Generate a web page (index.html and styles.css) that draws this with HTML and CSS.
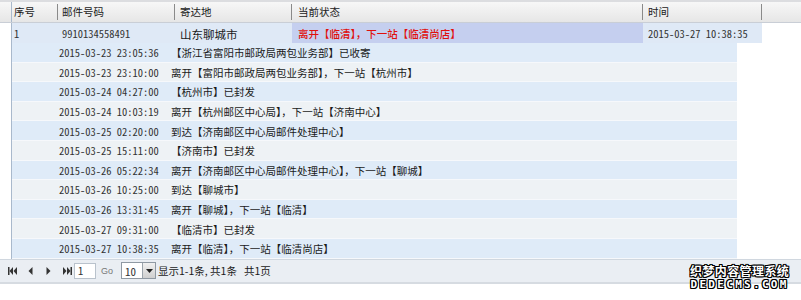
FILE: index.html
```html
<!DOCTYPE html>
<html>
<head>
<meta charset="utf-8">
<link rel="stylesheet" href="styles.css">
</head>
<body>
<div class="grid">
  <div class="hd">
    <div class="gut"></div>
    <div class="hc c1">序号</div>
    <div class="hc c2">邮件号码</div>
    <div class="hc c3">寄达地</div>
    <div class="hc c4">当前状态</div>
    <div class="hc c5">时间</div>
    <div class="hc cx"></div>
  </div>
  <div class="body">
    <div class="row main">
      <div class="gut"></div>
      <div class="dc c1 mono">1</div>
      <div class="dc c2 mono">9910134558491</div>
      <div class="dc c3 city">山东聊城市</div>
      <div class="dc c4 status">离开【临清】，下一站【临清尚店】</div>
      <div class="dc c5 mono">2015-03-27 10:38:35</div>
    </div>
    <div class="detail">
      <div class="drow"><span class="dt mono">2015-03-23 23:05:36</span><span class="dd">【浙江省富阳市邮政局两包业务部】已收寄</span></div>
      <div class="drow"><span class="dt mono">2015-03-23 23:10:00</span><span class="dd">离开【富阳市邮政局两包业务部】，下一站【杭州市】</span></div>
      <div class="drow"><span class="dt mono">2015-03-24 04:27:00</span><span class="dd">【杭州市】已封发</span></div>
      <div class="drow"><span class="dt mono">2015-03-24 10:03:19</span><span class="dd">离开【杭州邮区中心局】，下一站【济南中心】</span></div>
      <div class="drow"><span class="dt mono">2015-03-25 02:20:00</span><span class="dd">到达【济南邮区中心局邮件处理中心】</span></div>
      <div class="drow"><span class="dt mono">2015-03-25 15:11:00</span><span class="dd">【济南市】已封发</span></div>
      <div class="drow"><span class="dt mono">2015-03-26 05:22:34</span><span class="dd">离开【济南邮区中心局邮件处理中心】，下一站【聊城】</span></div>
      <div class="drow"><span class="dt mono">2015-03-26 10:25:00</span><span class="dd">到达【聊城市】</span></div>
      <div class="drow"><span class="dt mono">2015-03-26 13:31:45</span><span class="dd">离开【聊城】，下一站【临清】</span></div>
      <div class="drow"><span class="dt mono">2015-03-27 09:31:00</span><span class="dd">【临清市】已封发</span></div>
      <div class="drow"><span class="dt mono">2015-03-27 10:38:35</span><span class="dd">离开【临清】，下一站【临清尚店】</span></div>
    </div>
  </div>
  <div class="pager">
    <svg class="pi" width="10" height="8" viewBox="0 0 10 8"><rect x="0" y="0" width="1.5" height="8" fill="#333"/><path d="M5 0 L1.5 4 L5 8Z M9 0 L5.5 4 L9 8Z" fill="#333"/></svg>
    <svg class="pi" width="6" height="8" viewBox="0 0 6 8"><path d="M4.5 0 L0.5 4 L4.5 8Z" fill="#333"/></svg>
    <svg class="pi" width="6" height="8" viewBox="0 0 6 8"><path d="M1.5 0 L5.5 4 L1.5 8Z" fill="#333"/></svg>
    <svg class="pi" width="10" height="8" viewBox="0 0 10 8"><path d="M1 0 L4.5 4 L1 8Z M5 0 L8.5 4 L5 8Z" fill="#333"/><rect x="8.5" y="0" width="1.5" height="8" fill="#333"/></svg>
    <span class="pinput mono">1</span>
    <span class="go">Go</span>
    <span class="psel"><span class="mono">10</span><span class="arr"><svg width="7" height="4" viewBox="0 0 7 4"><path d="M0 0 H7 L3.5 4Z" fill="#222"/></svg></span></span>
    <span class="info">显示1-1条, 共1条&nbsp;&nbsp;&nbsp;共1页</span>
  </div>
</div>
<div class="wm"><div class="wm1">织梦内容管理系统</div><div class="wm2">DEDECMS.COM</div></div>
</body>
</html>
```
FILE: styles.css
```css
html, body { margin: 0; padding: 0; background: #fff; }
body {
  width: 801px; height: 300px; overflow: hidden; position: relative;
  font-family: "Noto Sans CJK SC", "Noto Sans", sans-serif;
  font-size: 10.5px; color: #1a1a1a;
}
.mono { font-family: "Noto Sans Mono CJK SC", "Liberation Mono", monospace; font-size: 10.5px; color: #333; }
.grid { width: 801px; }
.hd {
  display: flex; height: 23px; box-sizing: border-box; align-items: stretch;
  background: linear-gradient(#f7f7f7, #e6e6e6);
  border-top: 2px solid #dcdde0;
  border-bottom: 1px solid #c9ced6;
}
.gut { width: 12px; flex: none; border-right: 1px solid #a9b9cc; box-sizing: border-box; }
.hc { display: flex; align-items: center; box-sizing: border-box; line-height: 1; color: #1a1a1a; }
.c1 { width: 46px; padding-left: 2px; }
.c2 { width: 117px; padding-left: 4px; }
.c3 { width: 117px; padding-left: 5px; }
.c4 { width: 351px; padding-left: 6px; }
.c5 { width: 119px; padding-left: 5px; }
.hd .hc { border-image: linear-gradient(transparent 12%, #8a8a8a 12%, #8a8a8a 88%, transparent 88%) 1; border-style: solid; border-width: 0 1px 0 0; }
.hd .hc.cx { border-width: 0; flex: 1; }
.body { display: flex; flex-direction: column; }
.row { display: flex; height: 20px; }
.main .gut { background: #fff; }
.dc { display: flex; align-items: center; background: #dfe9f6; box-sizing: border-box; padding-top: 1px; }
.status { background: #c5cfef; color: #e0100c; font-weight: 500; }
.city { font-size: 11.5px; color: #1a1a1a; }
.detail { width: 726px; border-left: 1px solid #a9b9cc; margin-left: 11px; box-sizing: border-box; display: flex; flex-direction: column; }
.drow { display: flex; align-items: center; height: 19.6px; border-bottom: 1px solid #f6f8fb; box-sizing: border-box; padding-top: 1px; }
.drow:nth-child(odd) { background: #dfebf8; }
.drow:nth-child(even) { background: #eef2f5; }
.dt { padding-left: 47px; width: 159px; flex: none; box-sizing: border-box; }
.dd { color: #1a1a1a; }
.pager {
  display: flex; align-items: center; height: 25px; box-sizing: border-box;
  background: #eaeef3; border-top: 1px solid #d0d7df; border-bottom: 2px solid #d6dbe1; padding-left: 8px;
}
.pi { flex: none; }
.pi:nth-child(1) { margin-right: 10px; }
.pi:nth-child(2) { margin-right: 11px; }
.pi:nth-child(3) { margin-right: 11px; }
.pinput {
  margin-left: 2px; width: 22px; height: 16px; box-sizing: border-box; background: #fff;
  border: 1px solid #b9c2cc; display: flex; align-items: center; padding-left: 3px; color: #333;
}
.go { margin-left: 5px; font-family: "Liberation Sans", sans-serif; font-size: 9px; color: #777; }
.psel {
  margin-left: 8px; width: 35px; height: 17px; box-sizing: border-box; border: 1px solid #8f99a3;
  background: #fff; display: flex; align-items: center; padding-left: 3px;
}
.psel .mono { flex: 1; font-size: 11px; }
.arr { width: 12px; height: 15px; background: linear-gradient(#f0f0f0, #cfcfcf); border-left: 1px solid #9aa3ab; display: flex; align-items: center; justify-content: center; }
.info { margin-left: 2px; color: #1a1a1a; }
.wm { position: absolute; left: 690px; top: 265px; text-align: center; color: #fff; font-weight: bold; line-height: 1; 
  text-shadow: 1px 0 0 #000, -1px 0 0 #000, 0 1px 0 #000, 0 -1px 0 #000, 1px 1px 0 #000, -1px -1px 0 #000, 1px -1px 0 #000, -1px 1px 0 #000; }
.wm1 { font-size: 12px; letter-spacing: 0.4px; }
.wm2 { font-family: "DejaVu Sans Mono", monospace; font-size: 11px; letter-spacing: 2.3px; margin-top: 2px; }
```
